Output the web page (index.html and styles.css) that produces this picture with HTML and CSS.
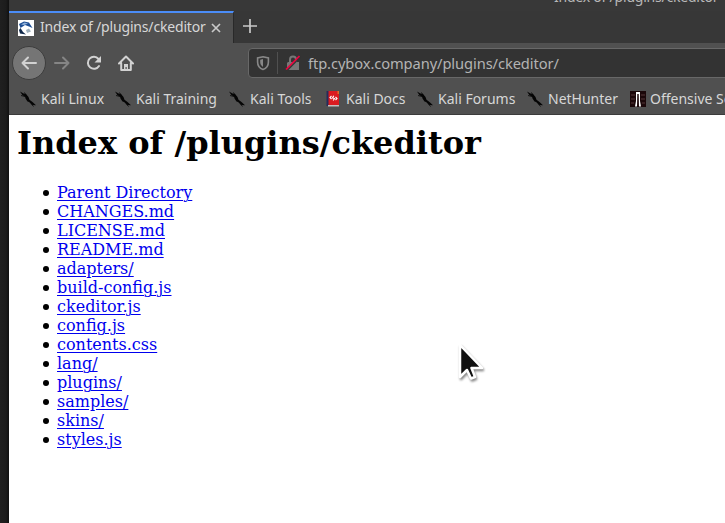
FILE: index.html
```html
<!DOCTYPE html>
<html lang="en">
<head>
<meta charset="utf-8">
<title>Index of /plugins/ckeditor</title>
<link rel="stylesheet" href="styles.css">
</head>
<body>
<svg class="defs" width="0" height="0"><defs>
<symbol id="kali" viewBox="0 0 16 16"><path d="M0 .5 3.500 2.500 6 3 8.500 6 9.500 8.700 12.500 11 16 14.300 12.500 14 9 11 7.500 10.500 5.500 7.500 5 5.500 2.500 4.200z" fill="#050505"/><path d="M4.500 1.500 6 4M11 12.500 13.500 15.500M1 4.500l4 1" stroke="#050505" stroke-width=".8"/></symbol>
</defs></svg>
<div class="desktop">
<div class="window">
  <header class="chrome">
    <div class="titlebar"><span>Index of /plugins/ckeditor</span></div>
    <div class="tabs">
      <div class="tab">
        <svg class="favicon" viewBox="0 0 16 16"><path fill="#fff" d="M0 0h16v16H0z"/><path fill="#1e4e94" d="M1 4 6 1.500l5 1L14.500 8 11 6.500 7 5 2.500 8z"/><path fill="#8fb0d8" d="M3 4.500 6.500 2.500l3.500 1L6 5z"/><path fill="#10284a" d="M1 10 2.500 8l2.500 4 3 2.500-6-1z"/><path fill="#9fb0bd" d="m8 10 3-1.500 2 3-4 1.500z"/></svg>
        <span class="tab-title">Index of /plugins/ckeditor</span>
        <svg class="close" viewBox="0 0 10 10"><path d="m1 1 8 8M9 1 1 9"/></svg>
      </div>
      <svg class="plus" viewBox="0 0 14 14"><path d="M7 0v14M0 7h14"/></svg>
    </div>
    <nav class="toolbar">
      <span class="back"><svg viewBox="0 0 16 16"><path d="M15 8H1.500M7 2.500 1.500 8 7 13.500"/></svg></span>
      <svg class="icon forward" viewBox="0 0 16 16"><path d="M1 8h13.500M9 2.500 14.500 8 9 13.500"/></svg>
      <svg class="icon reload" viewBox="0 0 16 16"><path d="M12.500 4A6 6 0 1 0 13 11"/><path class="fill" d="M15 1v6.500H8.500z"/></svg>
      <svg class="icon home" viewBox="0 0 16 16"><path d="M1 8.500 8 1.500l7 7M3.200 8v7h9.600V8"/><path class="fill" d="M6 9h4v6H8.700v-3H7.500v3H6z"/></svg>
      <div class="address">
        <svg class="shield" viewBox="0 0 14 16"><path d="M7 1.800 12.400 3v4c0 4-2 6.300-5.400 7.400C3.600 13.300 1.600 11 1.600 7V3z"/><path class="fill" d="M7 4v8C5 10.500 4.200 9 4.200 7V4.700z"/></svg>
        <i class="divider"></i>
        <svg class="lock" viewBox="0 0 16 16"><path class="body" d="M3 7h11v8H2V8z"/><path class="shackle" d="M5 8V4.500a3 3 0 0 1 6 0V8"/><path class="slash-edge" d="M2 15.500 15.500 2"/><path class="slash" d="M1 14.500 14.500 1"/></svg>
        <span class="url">ftp.cybox.company/plugins/ckeditor/</span>
      </div>
    </nav>
    <nav class="bookmarks">
      <span class="mark linux"><svg><use href="#kali"/></svg><b>Kali Linux</b></span>
      <span class="mark training"><svg><use href="#kali"/></svg><b>Kali Training</b></span>
      <span class="mark tools"><svg><use href="#kali"/></svg><b>Kali Tools</b></span>
      <span class="mark docs"><svg viewBox="0 0 16 16"><path fill="#db1b20" d="M3 0h11v14H3z"/><path fill="#252c5b" d="M1.500 0H3.500v15h-2z"/><path fill="#e07028" d="M12.500 0H14v3h-1.500z"/><path fill="#c7bcbc" d="M3 14h11v1.500H3z"/><path d="M6.500 5 5 6.500 6.500 8M10.500 6 12 7.500 10.500 9M8.800 4.800 7.500 7l2 .5L8.200 9.500" stroke="#fff" fill="none" stroke-width="1.100"/></svg><b>Kali Docs</b></span>
      <span class="mark forums"><svg><use href="#kali"/></svg><b>Kali Forums</b></span>
      <span class="mark hunter"><svg><use href="#kali"/></svg><b>NetHunter</b></span>
      <span class="mark offensive"><svg viewBox="0 0 16 16"><path fill="#1b0709" d="M0 0h16v16H0z"/><path d="M1 4h4M11 4h4M1 8h4M11 8h4M1 12h3M12 12h3" stroke="#43282a" stroke-width="1.500"/><path fill="#fff" d="M6 1h4v9l1 5.500H9L8.700 3H7.300L7 15.500H5L6 10z"/></svg><b>Offensive Security</b></span>
    </nav>
  </header>
  <main>
    <h1>Index of /plugins/ckeditor</h1>
    <ul>
      <li><a href="#">Parent Directory</a></li>
      <li><a href="#">CHANGES.md</a></li>
      <li><a href="#">LICENSE.md</a></li>
      <li><a href="#">README.md</a></li>
      <li><a href="#">adapters/</a></li>
      <li><a href="#">build-config.js</a></li>
      <li><a href="#">ckeditor.js</a></li>
      <li><a href="#">config.js</a></li>
      <li><a href="#">contents.css</a></li>
      <li><a href="#">lang/</a></li>
      <li><a href="#">plugins/</a></li>
      <li><a href="#">samples/</a></li>
      <li><a href="#">skins/</a></li>
      <li><a href="#">styles.js</a></li>
    </ul>
  </main>
</div>
</div>
<svg class="cursor" viewBox="0 0 28 42"><path d="M2 3v32l7-7 4 8.500 4-1.500-3.500-9H24z"/></svg>
</body>
</html>
```

FILE: styles.css
```css
* { box-sizing: border-box; }
body { margin: 0; width: 725px; height: 523px; overflow: hidden; }
svg { display: block; flex: none; }
.defs { position: absolute; }
.desktop { height: 523px; padding-left: 9px; background: linear-gradient(90deg, #202020 0, #1c1c1c 6px, #101010 9px); }
.window { height: 523px; overflow: hidden; background: #fff; }
.chrome { height: 115px; background: #505050; border-bottom: 1px solid #3b3b3b; font: 14px/20px "Noto Sans", sans-serif; color: #d7d7d7; white-space: nowrap; }
.titlebar { height: 11px; overflow: hidden; background: #383838; color: #b8b8b8; padding-left: 545px; }
.titlebar span { display: block; margin-top: -13px; font-size: 14px; letter-spacing: -.22px; }
.tabs { height: 32px; display: flex; background: #373737; }
.tab { width: 225px; height: 32px; padding: 0 12px 0 9px; display: flex; align-items: center; background: #505050; border-top: 2px solid #4b8df8; border-right: 1px solid #292929; }
.favicon { width: 16px; height: 16px; margin-top: -1px; }
.tab-title { width: 170px; margin-left: 6px; margin-top: -2px; letter-spacing: -.17px; }
.close { width: 10px; height: 10px; margin: -1px 0 0 1px; }
.close path, .plus path { fill: none; stroke: #c9c9c9; stroke-width: 1.7; }
.plus { width: 14px; height: 14px; margin: 8px 0 0 9px; }
.toolbar { height: 40px; display: flex; align-items: center; padding-left: 3px; }
.back { width: 34px; height: 34px; flex: none; border: 1px solid #3d3d3d; border-radius: 50%; background: #757575; display: grid; place-items: center; }
.back svg, .icon { width: 16px; height: 16px; fill: none; stroke: #d2d2d2; stroke-width: 2; stroke-linecap: round; stroke-linejoin: round; }
.icon.forward { margin-left: 8px; stroke: #858585; }
.reload { margin-left: 16px; }
.home { margin-left: 16px; }
.icon .fill { fill: #d2d2d2; stroke: none; }
.address { width: 500px; height: 30px; margin-left: 114px; flex: none; border: 1px solid #686868; border-radius: 4px; background: #333; display: flex; align-items: center; padding-left: 7px; color: #b3b3b3; }
.shield { width: 14px; height: 16px; fill: none; stroke: #888; stroke-width: 1.6; }
.shield .fill { fill: #888; stroke: none; }
.divider { width: 1px; height: 22px; margin: 0 7px; background: #505050; }
.lock { width: 16px; height: 16px; fill: none; }
.lock .body { fill: #777; }
.lock .shackle { stroke: #777; stroke-width: 2; }
.slash-edge { stroke: #333; stroke-width: 1.5; }
.slash { stroke: #ed003e; stroke-width: 1.7; }
.url { margin-left: 7px; font-size: 14.67px; letter-spacing: -.08px; }
.bookmarks { height: 31px; display: flex; align-items: center; padding-left: 11px; }
.mark { display: flex; align-items: center; gap: 5px; flex: none; }
.mark svg { width: 16px; height: 16px; }
.mark b { font-weight: 400; }
.linux { width: 95px; }
.training { width: 114px; }
.tools { width: 96px; }
.docs { width: 92px; }
.forums { width: 110px; }
.hunter { width: 103px; }
.offensive { gap: 4px; }
main { padding: 10px 8px; font: 16px/19px "DejaVu Serif", serif; color: #000; }
h1 { margin: 0 0 21px; font-size: 32px; line-height: 37px; }
ul { margin: 0; padding-left: 26px; list-style: none; }
li { display: flex; align-items: center; gap: 8px; }
li::before { content: ""; width: 6px; height: 6px; margin-top: 1px; border-radius: 50%; background: #000; }
a { color: #0000ee; text-decoration: underline; text-underline-offset: 2px; text-decoration-thickness: 1px; }
.cursor { position: absolute; left: 458px; top: 342px; width: 28px; height: 42px; fill: #111; stroke: #fff; stroke-width: 2.5; stroke-linejoin: round; filter: drop-shadow(1px 2px 1px #0007); }
```
